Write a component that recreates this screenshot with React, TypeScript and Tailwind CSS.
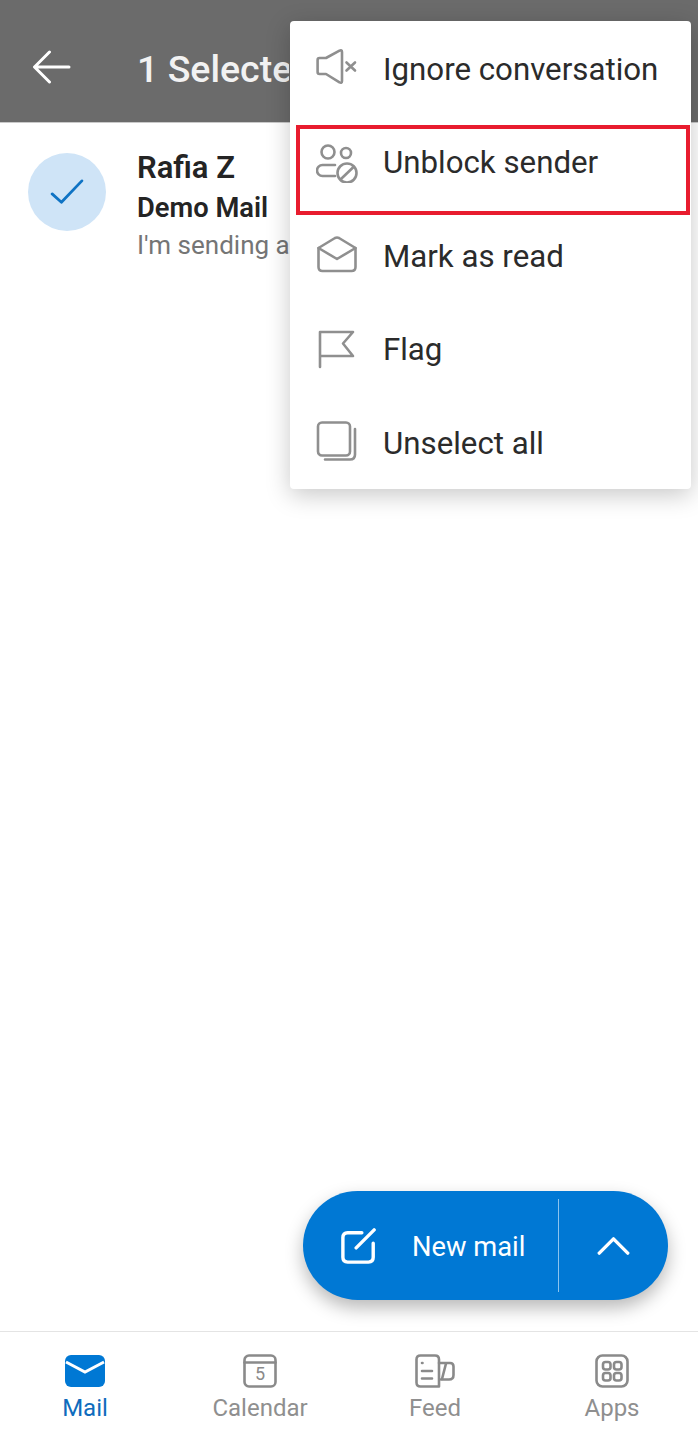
const iconProps = {
  fill: "none",
  stroke: "currentColor",
  strokeWidth: 2.6,
  strokeLinecap: "round",
  strokeLinejoin: "round",
} as const;

function MuteIcon() {
  return (
    <svg viewBox="0 0 42 42" className="h-[42px] w-[42px]" {...iconProps}>
      <path d="M3.5 11H10L23.5 3.6Q26 2.6 26 5V34Q26 36.4 23.5 35.4L10 27H3.5Q1.6 27 1.6 25V13Q1.6 11 3.5 11Z" />
      <path d="M30.5 15.5L39 23.5M39 15.5L30.5 23.5" />
    </svg>
  );
}

function BlockIcon() {
  return (
    <svg viewBox="0 0 42 42" className="h-[42px] w-[42px]" {...iconProps}>
      <circle cx="12" cy="11" r="6.5" />
      <circle cx="30" cy="12" r="5" />
      <path d="M19 24H6.5a5.5 5.5 0 0 0 0 11H19" />
      <circle cx="31" cy="32" r="9.5" />
      <path d="M25 38L37.5 26" />
    </svg>
  );
}

function EnvelopeOpenIcon() {
  return (
    <svg viewBox="0 0 42 42" className="h-[42px] w-[42px]" {...iconProps}>
      <path d="M2.5 14L19 4Q21 3 23 4L39.5 14V33Q39.5 37 35.5 37H6.5Q2.5 37 2.5 33Z" />
      <path d="M2.5 14L21 25L39.5 14" />
    </svg>
  );
}

function FlagIcon() {
  return (
    <svg viewBox="0 0 42 42" className="h-[42px] w-[42px]" {...iconProps}>
      <path d="M4 39V4H37L27 15.5L37 28H4" />
    </svg>
  );
}

function SelectAllIcon() {
  return (
    <svg viewBox="0 0 42 42" className="h-[42px] w-[42px]" {...iconProps}>
      <rect x="2" y="1.5" width="32" height="33" rx="4" />
      <path d="M9 38.5H34Q39 38.5 39 33.5V8" />
    </svg>
  );
}

function ComposeIcon() {
  return (
    <svg viewBox="0 0 38 38" className="h-[36px] w-[36px]" fill="none" stroke="currentColor" strokeWidth="3.6" strokeLinecap="round" strokeLinejoin="round">
      <path d="M22 5H7Q2 5 2 10V31Q2 36 7 36H29Q34 36 34 31V16" />
      <path d="M16 21L35 2" />
    </svg>
  );
}

function MailIcon() {
  return (
    <svg viewBox="0 0 40 32" className="h-[32px] w-[40px]">
      <rect width="40" height="32" rx="6" fill="#0078d4" />
      <path d="M1 7L20 17L39 7" fill="none" stroke="#fff" strokeWidth="3" />
    </svg>
  );
}

function CalendarIcon() {
  return (
    <div className="relative h-[34px] w-[34px]">
      <svg viewBox="0 0 34 34" className="h-[34px] w-[34px]" {...iconProps}>
        <rect x="1.5" y="1.5" width="31" height="31" rx="4.5" />
        <path d="M1.5 8.5H32.5" />
      </svg>
      <span className="absolute inset-x-0 top-[9px] text-center text-[18px] leading-[22px] text-[#8a8a8a]">5</span>
    </div>
  );
}

function FeedIcon() {
  return (
    <svg viewBox="0 0 40 34" className="h-[34px] w-[40px]" {...iconProps}>
      <path d="M5.5 1.5H20Q24 1.5 24 5.5V32.5H5.5Q1.5 32.5 1.5 28.5V5.5Q1.5 1.5 5.5 1.5Z" />
      <path d="M24 9H35Q38.5 9 38.5 12.5V21Q38.5 25.5 34 25.5H26" />
      <path d="M31 9.5L27 25" />
      <path d="M7 9H7.5M7 17H17M7 24.5H17" />
    </svg>
  );
}

function AppsIcon() {
  return (
    <svg viewBox="0 0 34 34" className="h-[34px] w-[34px]" {...iconProps}>
      <rect x="1.5" y="1.5" width="31" height="31" rx="6" />
      <rect x="8" y="8" width="7.5" height="7.5" rx="2.5" />
      <rect x="19" y="8" width="7.5" height="7.5" rx="2.5" />
      <rect x="8" y="19" width="7.5" height="7.5" rx="2.5" />
      <rect x="19" y="19" width="7.5" height="7.5" rx="2.5" />
    </svg>
  );
}

const menuItems = [
  { label: "Ignore conversation", icon: <MuteIcon /> },
  { label: "Unblock sender", icon: <BlockIcon />, highlighted: true },
  { label: "Mark as read", icon: <EnvelopeOpenIcon /> },
  { label: "Flag", icon: <FlagIcon /> },
  { label: "Unselect all", icon: <SelectAllIcon /> },
];

const tabs = [
  { label: "Mail", icon: <MailIcon />, active: true },
  { label: "Calendar", icon: <CalendarIcon /> },
  { label: "Feed", icon: <FeedIcon /> },
  { label: "Apps", icon: <AppsIcon />, inset: "pl-[6px]" },
];

export default function App() {
  return (
    <div className="relative flex h-[1434px] w-[698px] flex-col overflow-hidden bg-white font-['Roboto',sans-serif]">
      <header className="flex h-[123px] shrink-0 items-center gap-[65px] border-b border-[#c9c9c9] bg-[#6b6b6b] pt-[18px] pl-[32px] text-white">
        <svg viewBox="0 0 40 34" className="-mt-[6px] h-[34px] w-[40px]" fill="none" stroke="currentColor" strokeWidth="3" strokeLinecap="round" strokeLinejoin="round">
          <path d="M37 17H3M17.5 2L2.5 17L17.5 32" />
        </svg>
        <h1 className="w-[152px] overflow-hidden whitespace-nowrap text-[37.5px] font-medium leading-none text-[#f2f2f2]">1 Selected</h1>
      </header>

      <main className="flex-1">
        <div className="flex gap-[31px] pl-[28px] pt-[30px]">
          <div className="flex h-[78px] w-[78px] shrink-0 items-center justify-center rounded-full bg-[#cfe4f7] text-[#0f73c4]">
            <svg viewBox="0 0 36 28" className="h-[26px] w-[34px]" fill="none" stroke="currentColor" strokeWidth="3" strokeLinecap="round" strokeLinejoin="round">
              <path d="M2 16L12 25L34 2" />
            </svg>
          </div>
          <div className="w-[152px] overflow-hidden whitespace-nowrap">
            <p className="text-[31px] font-semibold leading-[30px] text-[#242424]">Rafia Z</p>
            <p className="mt-[10px] text-[27.3px] font-semibold leading-[30px] text-[#242424]">Demo Mail</p>
            <p className="mt-[7px] text-[26px] leading-[30px] text-[#757575]">I'm sending a demo mail</p>
          </div>
        </div>
      </main>

      <nav className="grid h-[103px] shrink-0 grid-cols-[170px_180px_170px_178px] border-t border-[#e4e4e4] pt-[21px]">
        {tabs.map((tab) => (
          <div key={tab.label} className={`flex flex-col items-center ${tab.inset ?? ""} ${tab.active ? "text-[#0f6cbd]" : "text-[#8f8f8f]"}`}>
            <div className="flex h-[36px] items-center justify-center text-[#8a8a8a]">{tab.icon}</div>
            <span className="mt-[5px] text-[24px] leading-[28px]">{tab.label}</span>
          </div>
        ))}
      </nav>

      {/* action sheet sits over the header and list */}
      <div className="absolute left-[290px] top-[21px] w-[401px] rounded-[4px] bg-white shadow-[0_6px_24px_rgba(0,0,0,0.22)]">
        {menuItems.map((item) => (
          <div key={item.label} className="relative flex h-[93.5px] items-center gap-[25px] pl-[26px] pt-[1px] text-[#8f8f8f]">
            {item.highlighted ? <span className="absolute left-[6px] right-px top-[10px] h-[90px] border-4 border-[#e81c2e]" /> : null}
            {item.icon}
            <span className="whitespace-nowrap pt-[2px] text-[31.25px] leading-none text-[#2b2b2b]">{item.label}</span>
          </div>
        ))}
      </div>

      <div className="absolute left-[303px] top-[1191px] flex h-[109px] w-[365px] items-center rounded-full bg-[#0078d4] text-white shadow-[0_8px_18px_rgba(0,0,0,0.28)]">
        <div className="flex w-[255px] items-center pl-[38px]">
          <ComposeIcon />
          <span className="ml-[35px] whitespace-nowrap pt-[4px] text-[27.3px] leading-none">New mail</span>
        </div>
        <div className="h-[93px] w-px bg-[#8cc4ee]" />
        <div className="flex flex-1 items-center justify-center">
          <svg viewBox="0 0 34 20" className="h-[19px] w-[33px]" fill="none" stroke="currentColor" strokeWidth="3.6" strokeLinecap="round" strokeLinejoin="round">
            <path d="M2 18L17 3L32 18" />
          </svg>
        </div>
      </div>
    </div>
  );
}
